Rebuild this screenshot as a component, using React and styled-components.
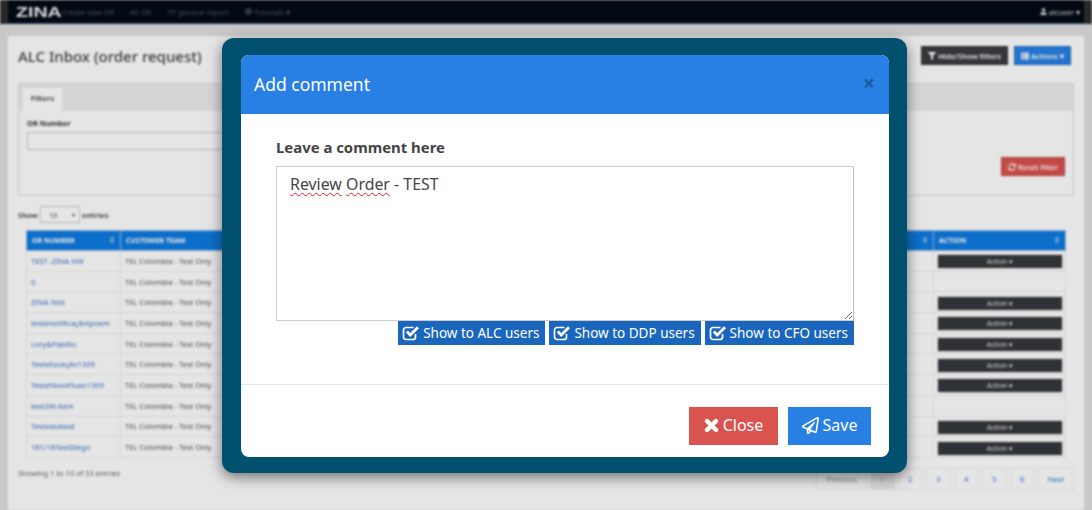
import React from 'react';
import styled, { createGlobalStyle } from 'styled-components';
import { FaFilter, FaThList, FaSyncAlt, FaUser, FaRegPaperPlane, FaSort, FaGlobe } from 'react-icons/fa';

const rows = [
  ['TEST -ZINA HW', true],
  ['0', false],
  ['ZINA-Test', true],
  ['testenotificaçãotpoem', true],
  ['Lory&Pablito', true],
  ['TesteExceção1309', true],
  ['TesteNovoFluxo1309', true],
  ['test2W-item', false],
  ['Testeasdasd', true],
  ['181/18TestDiego', true],
];

const CheckIcon = () => (
  <svg width="18" height="16" viewBox="0 0 18 16" fill="none" stroke="#fff">
    <path d="M13.5 9v3a2.5 2.5 0 0 1-2.5 2.5H4A2.5 2.5 0 0 1 1.5 12V5A2.5 2.5 0 0 1 4 2.5h7.5" strokeWidth="1.7" />
    <path d="M4.8 6.6l3.4 3.4L16 2.2" strokeWidth="2.8" />
  </svg>
);

const CloseIcon = () => (
  <svg width="15" height="15" viewBox="0 0 15 15" fill="none" stroke="#fff">
    <path d="M3 3l9 9M12 3l-9 9" strokeWidth="4.4" strokeLinecap="round" />
  </svg>
);

export default function App() {
  return (
    <Screen>
      <GlobalStyle />
      <Page>
        <Topbar>
          <Logo>ZINA</Logo>
          <NavLink>Create new OR</NavLink>
          <NavLink>All OR</NavLink>
          <NavLink>TP general report</NavLink>
          <NavLink><FaGlobe /> Tutorials ▾</NavLink>
          <UserMenu><FaUser /> alcuser ▾</UserMenu>
        </Topbar>
        <Content>
          <TitleRow>
            <Title>ALC Inbox (order request)</Title>
            <SmallButton $bg="#3a3d41"><FaFilter /> Hide/Show filters</SmallButton>
            <SmallButton $bg="#2980e4"><FaThList /> Actions ▾</SmallButton>
          </TitleRow>
          <FilterPanel>
            <TabStrip><Tab>Filters</Tab></TabStrip>
            <FilterBody>
              <FieldLabel>OR Number</FieldLabel>
              <FieldInput />
              <ResetRow>
                <SmallButton $bg="#d9534f"><FaSyncAlt /> Reset filter</SmallButton>
              </ResetRow>
            </FilterBody>
          </FilterPanel>
          <ShowRow>Show <EntriesSelect>10 <span>▾</span></EntriesSelect> entries</ShowRow>
          <DataTable>
            <colgroup>
              <col style={{ width: 94 }} />
              <col />
              <col style={{ width: 132 }} />
            </colgroup>
            <thead>
              <tr>
                <th>OR NUMBER<FaSort /></th>
                <th>CUSTOMER TEAM<FaSort /></th>
                <th>ACTION<FaSort /></th>
              </tr>
            </thead>
            <tbody>
              {rows.map(([name, hasAction]) => (
                <tr key={name}>
                  <td><OrLink>{name}</OrLink></td>
                  <td>TEL Colombia - Test Only</td>
                  <td>{hasAction && <ActionButton>Action ▾</ActionButton>}</td>
                </tr>
              ))}
            </tbody>
          </DataTable>
          <TableFooter>
            <span>Showing 1 to 10 of 53 entries</span>
            <Pagination>
              <PageItem $muted>Previous</PageItem>
              <PageItem $active>1</PageItem>
              <PageItem>2</PageItem>
              <PageItem>3</PageItem>
              <PageItem>4</PageItem>
              <PageItem>5</PageItem>
              <PageItem>6</PageItem>
              <PageItem>Next</PageItem>
            </Pagination>
          </TableFooter>
        </Content>
      </Page>
      <Overlay>
        <ModalFrame>
          <Modal>
            <ModalHeader>
              <ModalTitle>Add comment</ModalTitle>
              <CloseX>×</CloseX>
            </ModalHeader>
            <ModalBody>
              <CommentLabel>Leave a comment here</CommentLabel>
              <CommentBox>
                <Misspelled>Review</Misspelled> <Misspelled>Order</Misspelled> - TEST
              </CommentBox>
              <ShowRowButtons>
                <ShowButton><CheckIcon />Show to ALC users</ShowButton>
                <ShowButton><CheckIcon />Show to DDP users</ShowButton>
                <ShowButton><CheckIcon />Show to CFO users</ShowButton>
              </ShowRowButtons>
            </ModalBody>
            <ModalFooter>
              <FooterButton $bg="#d9534f" $w={89}><CloseIcon />Close</FooterButton>
              <FooterButton $bg="#2980e4" $w={83}><FaRegPaperPlane />Save</FooterButton>
            </ModalFooter>
          </Modal>
        </ModalFrame>
      </Overlay>
    </Screen>
  );
}

const GlobalStyle = createGlobalStyle`
  html, body {
    margin: 0;
    padding: 0;
    background: #dfdfdf;
  }
  * {
    box-sizing: border-box;
  }
`;

const Screen = styled.div`
  position: relative;
  width: 1092px;
  height: 510px;
  overflow: hidden;
  font-family: "Noto Sans", "Open Sans", sans-serif;
`;

const Page = styled.div`
  height: 510px;
  background: #dfdfdf;
  filter: blur(1.3px);
  color: #333;
`;

const Topbar = styled.div`
  height: 24px;
  background: #030b15;
  border-bottom: 1px solid #2a4a66;
  border-left: 8px solid #2e2e2e;
  border-right: 8px solid #2e2e2e;
  display: flex;
  align-items: center;
  padding: 0 4px 0 8px;
  gap: 16px;
  color: #4d5a68;
  font-size: 7.5px;
`;

const Logo = styled.div`
  font-family: "Liberation Sans", sans-serif;
  font-size: 14px;
  font-weight: 700;
  letter-spacing: 0;
  color: #f0f0f0;
  width: 30px;
  transform: scaleX(1.4);
  transform-origin: left center;
`;

const NavLink = styled.span`
  svg {
    font-size: 7px;
  }
`;

const UserMenu = styled.span`
  margin-left: auto;
  color: #d8d8d8;
  svg {
    font-size: 7px;
  }
`;

const Content = styled.div`
  margin: 12px 8px 0;
  height: 474px;
  background: #fff;
  padding: 0 10px;
`;

const TitleRow = styled.div`
  height: 47px;
  display: flex;
  align-items: flex-start;
  gap: 6px;
  padding: 10px 3px 0 0;
`;

const Title = styled.h1`
  margin: 0 auto 0 0;
  font-size: 15px;
  font-weight: 500;
  line-height: 20px;
  color: #444;
`;

const SmallButton = styled.button`
  height: 19px;
  padding: 0 6px;
  border: 1px solid rgba(0, 0, 0, 0.15);
  background: ${(p) => p.$bg};
  color: #fff;
  font-family: inherit;
  font-size: 7.5px;
  font-weight: 600;
  svg {
    font-size: 8px;
    vertical-align: -1px;
  }
`;

const FilterPanel = styled.div`
  height: 113px;
  border: 1px solid #ddd;
`;

const TabStrip = styled.div`
  height: 27px;
  background: #efefef;
  padding: 4px 0 0 4px;
`;

const Tab = styled.div`
  width: 39px;
  height: 23px;
  background: #fff;
  font-size: 7.5px;
  font-weight: 700;
  color: #555;
  text-align: center;
  line-height: 21px;
`;

const FilterBody = styled.div`
  padding: 6px 8px 0 8px;
`;

const FieldLabel = styled.div`
  font-size: 7.5px;
  font-weight: 700;
  height: 15px;
  line-height: 12px;
`;

const FieldInput = styled.div`
  width: 500px;
  height: 18px;
  border: 1px solid #ccc;
  background: #fff;
`;

const ResetRow = styled.div`
  display: flex;
  justify-content: flex-end;
  margin-top: 7px;
`;

const ShowRow = styled.div`
  height: 34px;
  padding-top: 3px;
  display: flex;
  align-items: center;
  gap: 2px;
  font-size: 7.5px;
  font-weight: 700;
  color: #555;
`;

const EntriesSelect = styled.div`
  width: 40px;
  height: 17px;
  border: 1px solid #ccc;
  background: #fff;
  padding: 0 4px 0 8px;
  display: flex;
  justify-content: space-between;
  align-items: center;
  font-weight: 400;
  span {
    font-size: 6px;
  }
`;

const DataTable = styled.table`
  margin-left: 8px;
  width: 1040px;
  table-layout: fixed;
  border-collapse: collapse;
  font-size: 7.5px;

  th {
    height: 20px;
    background: #0f7be0;
    color: #fff;
    font-size: 7px;
    font-weight: 700;
    text-align: left;
    padding: 0 4px 0 5px;
    border: 1px solid #9cc4ee;
  }
  th svg {
    float: right;
    font-size: 8px;
    opacity: 0.55;
  }
  td {
    height: 20.7px;
    padding: 0 3px 0 4px;
    border: 1px solid #eee;
    color: #555;
    white-space: nowrap;
  }
`;

const OrLink = styled.span`
  color: #3b6fc9;
`;

const ActionButton = styled.div`
  height: 13px;
  margin-top: 2px;
  background: #34373b;
  color: #e6e6e6;
  font-size: 7px;
  line-height: 13px;
  text-align: center;
  box-shadow: 0 0 1px rgba(0, 0, 0, 0.5);
`;

const TableFooter = styled.div`
  display: flex;
  justify-content: space-between;
  align-items: flex-start;
  margin-top: 10px;
  font-size: 7.5px;
  color: #666;
`;

const Pagination = styled.div`
  display: flex;
  gap: 3px;
`;

const PageItem = styled.div`
  min-width: 25px;
  height: 22px;
  padding: 0 9px;
  border: 1px solid #eee;
  background: ${(p) => (p.$active ? '#eee' : '#fff')};
  color: ${(p) => (p.$muted || p.$active ? '#999' : '#3b6fc9')};
  display: flex;
  align-items: center;
  justify-content: center;
  font-size: 7.5px;
`;

const Overlay = styled.div`
  position: absolute;
  inset: 0;
  background: rgba(0, 0, 0, 0.1);
  padding: 38px 0 0 222px;
`;

const ModalFrame = styled.div`
  width: 685px;
  height: 435px;
  padding: 17px 18px 16px 19px;
  background: #01506f;
  border-radius: 12px;
  box-shadow: 0 4px 14px rgba(0, 0, 0, 0.5);
`;

const Modal = styled.div`
  height: 100%;
  background: #fff;
  border-radius: 8px;
  overflow: hidden;
  display: flex;
  flex-direction: column;
`;

const ModalHeader = styled.div`
  height: 59px;
  flex: none;
  background: #2980e4;
  display: flex;
  align-items: center;
  justify-content: space-between;
  padding: 0 14px 2px 13px;
`;

const ModalTitle = styled.h4`
  margin: 0;
  font-size: 17.5px;
  font-weight: 400;
  color: #fff;
`;

const CloseX = styled.span`
  font-size: 21px;
  font-weight: 700;
  line-height: 1;
  color: #1d5a9e;
`;

const ModalBody = styled.div`
  height: 271px;
  flex: none;
  padding: 23px 35px 0;
  border-bottom: 1px solid #e5e5e5;
`;

const CommentLabel = styled.div`
  height: 29px;
  font-size: 14.9px;
  font-weight: 700;
  line-height: 20px;
  color: #444;
`;

const CommentBox = styled.div`
  height: 155px;
  border: 1px solid #ccc;
  border-right-color: #bbb;
  padding: 7px 13px;
  font-size: 15.9px;
  line-height: 21px;
  color: #444;
  resize: both;
  overflow: auto;
`;

const Misspelled = styled.span`
  text-decoration: underline wavy #e0201c 1px;
  text-underline-offset: 2px;
`;

const ShowRowButtons = styled.div`
  display: flex;
  justify-content: flex-end;
  gap: 4px;
`;

const ShowButton = styled.div`
  height: 24px;
  padding: 0 6px 0 4px;
  background: #1a66bd;
  color: #fff;
  font-size: 13.5px;
  display: flex;
  align-items: center;
  gap: 3px;
`;

const ModalFooter = styled.div`
  flex: 1;
  display: flex;
  justify-content: flex-end;
  gap: 10px;
  padding: 22px 18px 0 0;
`;

const FooterButton = styled.button`
  width: ${(p) => p.$w}px;
  height: 38px;
  padding: 0 0 2px;
  border: none;
  background: ${(p) => p.$bg};
  color: #fff;
  font-family: inherit;
  font-size: 16px;
  display: flex;
  align-items: center;
  justify-content: center;
  gap: 4px;
  svg {
    font-size: 17px;
  }
`;
